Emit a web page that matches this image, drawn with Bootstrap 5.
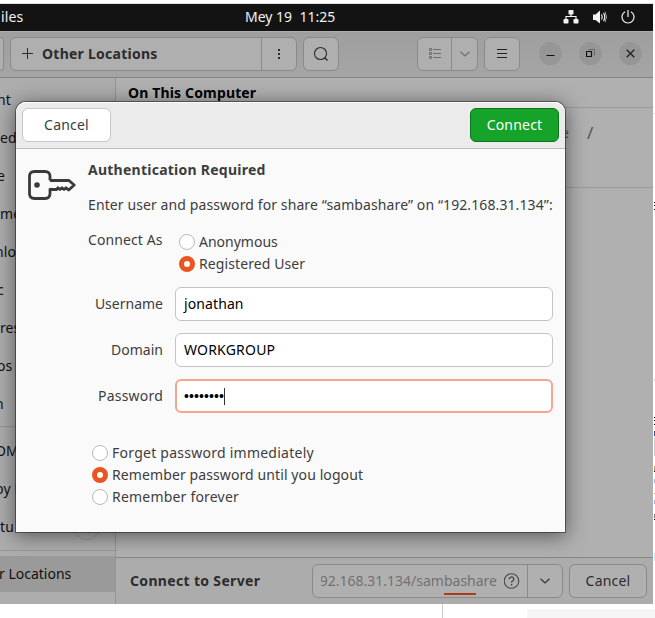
<!DOCTYPE html>
<html lang="en">
<head>
<meta charset="utf-8">
<title>Authentication Required</title>
<link href="https://cdn.jsdelivr.net/npm/bootstrap@5.3.0/dist/css/bootstrap.min.css" rel="stylesheet">
<style>
body{font-family:"Noto Sans","Open Sans",sans-serif;font-size:14px;line-height:22px;letter-spacing:.1px;background:#fff;color:#3d3d3d;width:655px;height:618px;overflow:hidden}
svg{display:block;flex:none}
.ls-0{letter-spacing:0}.ls-2{letter-spacing:.2px}.ls-3{letter-spacing:.25px}
.desktop{width:653px;height:601px;margin-top:3px;border-top:1px solid #ddd}
.top-panel{height:27px;background:#131313;color:#f2f2f2;padding:0 18px 1px 0}
.panel-app{width:245px;padding-left:1px}
.clock{white-space:pre}
.speaker{margin:0 13px}
.head-bar{height:47px;background:linear-gradient(#9f9f9f,#a5a5a5);border-bottom:1px solid #838383;border-top:1px solid #b0b0b0;padding:0 11px 2px 0}
.tool{height:34px;border:1px solid #8a8a8a;border-radius:6px;background:#afafaf;color:#2c2c2c}
.tool-edge{width:4px;border-left:0;border-radius:0 6px 6px 0}
.path-bar{width:287px;margin-left:6px}
.path-menu{width:35px;border-left:1px solid #8a8a8a}
.plus{margin:0 8px 0 11px}
.w-36{width:36px;margin-left:6px}
.view-tool{width:61px;margin-left:78px;color:#6f6f6f}
.view-more{width:26px;border-left:1px solid #8a8a8a}
.win-group{gap:17px}
.win-btn{width:23px;height:23px;border-radius:50%;background:#969696}
.side{width:116px;background:#adadad;border-right:1px solid #959595;color:#111;overflow:hidden;white-space:nowrap;padding-top:3px}
.side-row{height:38px;line-height:38px}
.cut-3{text-indent:-3px}.cut-5{text-indent:-5px}
.side-sep{height:1px;background:#989898;margin:3px 0 5px}
.side-sep.last{margin-top:4px}
.side-row.active{height:36px;line-height:36px;background:#9a9a9a;letter-spacing:0;text-indent:-1px}
.eject{width:26px;height:26px;border:1px solid #999;border-radius:50%;margin-right:15px}
.places{background:#b0b0b0}
.places-title{height:30px;line-height:30px;padding-left:12px;border-bottom:1px solid #9b9b9b;color:#000;letter-spacing:.15px}
.place-row{height:80px;border-bottom:1px solid #9b9b9b;color:#555;line-height:50px}
.place-row>span:first-child{width:453px;text-align:right}
.place-row>span+span{margin-left:18px;font-size:17px}
.server-bar{height:47px;background:#acacac;border-top:1px solid #868686;padding:0 6px 0 14px;color:#2c2c2c}
.server-title{width:182px;letter-spacing:.33px}
.server-bar .tool{background:#b0b0b0}
.address{width:251px}
.address-text{width:176px;height:32px;margin-left:8px;line-height:32px;overflow:hidden;color:#707070;position:relative}
.address-pulse{position:absolute;left:123px;bottom:2px;width:32px;height:2px;background:#ab3c15}
.address-more{width:35px;border-left:1px solid #8a8a8a}
.server-cancel{width:78px;margin-left:6px;line-height:32px}
.below{height:14px}
.below-line{width:443px;border-right:1px solid #ccc}
.below-box{width:128px;margin-top:5px;background:#f6f6f6}
.dialog-win{position:absolute;left:16px;top:102px;width:549px;height:430px;background:#fafafa;border-radius:10px 10px 0 0;box-shadow:0 0 0 1px rgba(0,0,0,.42),0 3px 20px 1px rgba(0,0,0,.5)}
.dialog-head{height:47px;background:#ebebeb;border-bottom:1px solid #bcbcbc;border-radius:10px 10px 0 0;padding:0 6px;box-shadow:inset 0 1px #fff}
.dlg-btn{height:34px;width:89px;padding:0;border-radius:6px;font-size:14px;line-height:32px;border:1px solid #c6c6c6;background:#fff;color:#3d3d3d}
.dlg-btn.ok{background:#15a32a;border-color:#0d731b;color:#fff}
.dialog-main{padding:10px 12px 0 12px}
.key-icon{margin:11px 12px 0 0}
.fields{width:465px}
.gap-line{margin-top:13px}
.form-line{height:34px;margin-bottom:12px}
.form-line label{width:75px;text-align:right;line-height:34px}
.form-control.field{width:378px;height:34px;margin-left:12px;padding:0 8px;line-height:32px;font-size:14px;color:#000;border:1px solid #c4c4c4;border-radius:6px;background:#fff}
.form-control.field.focused{border:2px solid #f4a78c;line-height:30px;padding:0 7px}
.dots{font-family:"Liberation Sans",sans-serif;letter-spacing:.1px}
.caret{width:1px;height:17px;background:#333}
.radio-dot{width:16px;height:16px;border:1px solid #b9b9b9;border-radius:50%;background:#fff;margin-right:4px;flex:none}
.radio-dot.on{border:5.5px solid #e95420}
.radio-line{height:22px}
.as-label{width:91px}
.as-options{padding:2px 0 12px}
.keep-options{padding:17px 0 0 4px}
.edge{position:absolute;left:653px;top:0}
</style>
</head>
<body>
<div class="desktop d-flex flex-column">
  <div class="top-panel d-flex align-items-center">
    <span class="panel-app">iles</span>
    <span class="clock ls-0">Mey 19  11:25</span>
    <div class="d-flex align-items-center ms-auto">
      <svg width="16" height="14" viewBox="0 0 16 14" fill="#f2f2f2"><rect x="5.500" y="0" width="5" height="4.500" rx=".8"/><rect x=".5" y="9" width="5" height="4.500" rx=".8"/><rect x="10.500" y="9" width="5" height="4.500" rx=".8"/><path d="M8 4v2.500M3 10V6.500h10V10" fill="none" stroke="#f2f2f2" stroke-width="1.200"/></svg>
      <svg class="speaker" width="16" height="14" viewBox="0 0 16 14" fill="#f2f2f2"><path d="M1 4.500h2.500L8 .5v13L3.500 10H1z"/><path d="M9.500 4.500q1.500 2.500 0 5M11.500 3q2.500 4 0 8" fill="none" stroke="#f2f2f2" stroke-width="1.200"/><path d="M13 1.700q3 5.300 0 10.600" fill="none" stroke="#aaa"/></svg>
      <svg width="14" height="14" viewBox="0 0 14 14" fill="none" stroke="#f2f2f2" stroke-width="1.200"><path d="M7 0v7M4 1.800a6 6 0 1 0 6 0"/></svg>
    </div>
  </div>
  <div class="head-bar d-flex align-items-center">
    <div class="tool tool-edge"></div>
    <div class="tool path-bar d-flex">
      <div class="d-flex align-items-center flex-grow-1">
        <svg class="plus" width="12" height="12" viewBox="0 0 12 12" stroke="currentColor"><path d="M5.500 0v11M0 5.500h11"/></svg>
        <b class="ls-3">Other Locations</b>
      </div>
      <div class="path-menu d-flex align-items-center justify-content-center"><svg width="2" height="10" fill="currentColor"><path d="M0 0h2v2H0zM0 4h2v2H0zM0 8h2v2H0z"/></svg></div>
    </div>
    <div class="tool w-36 d-flex align-items-center justify-content-center"><svg width="16" height="16" viewBox="0 0 16 16" fill="none" stroke="currentColor" stroke-width="1.100"><circle cx="7.500" cy="7.500" r="6"/><path d="M11.500 11.500l3 3" stroke-width="1.500"/></svg></div>
    <div class="tool view-tool d-flex">
      <div class="d-flex flex-grow-1 align-items-center justify-content-center"><svg width="12" height="12" viewBox="0 0 12 12" fill="none" stroke="currentColor"><path d="M.5.500h2v2h-2zM.5 4.500h2v2h-2zM.5 8.500h2v2h-2zM4 1.500h8M4 5.500h8M4 9.500h8"/></svg></div>
      <div class="view-more d-flex align-items-center justify-content-center"><svg width="10" height="6" viewBox="0 0 10 6" fill="none" stroke="currentColor" stroke-width="1.200"><path d="M.5.8L5 5 9.500.8"/></svg></div>
    </div>
    <div class="tool w-36 d-flex align-items-center justify-content-center"><svg width="10" height="10" viewBox="0 0 10 10" stroke="#222"><path d="M0 .5h10M0 4.500h10M0 8.500h10"/></svg></div>
    <div class="win-group d-flex ms-auto">
      <div class="win-btn d-flex align-items-center justify-content-center"><svg width="9" height="7"><path d="M.5 5.500h8" stroke="#111"/></svg></div>
      <div class="win-btn d-flex align-items-center justify-content-center"><svg width="9" height="9" viewBox="0 0 9 9" fill="none"><path d="M2.500.5h6v6" stroke="#666"/><path d="M.5 2.500h5v5h-5z" stroke="#111" stroke-width="1.200"/></svg></div>
      <div class="win-btn d-flex align-items-center justify-content-center"><svg width="9" height="9" viewBox="0 0 9 9" stroke="#222" stroke-width="1.300"><path d="M.7.7l7.600 7.600M8.300.7L.7 8.300"/></svg></div>
    </div>
  </div>
  <div class="d-flex flex-grow-1">
    <div class="side">
      <div class="side-row cut-3">nt</div>
      <div class="side-row">ed</div>
      <div class="side-row cut-3">e</div>
      <div class="side-row">me</div>
      <div class="side-row cut-5">nloads</div>
      <div class="side-row cut-3">c</div>
      <div class="side-row">res</div>
      <div class="side-row cut-3">os</div>
      <div class="side-row cut-5">n</div>
      <div class="side-sep"></div>
      <div class="side-row cut-5">OM</div>
      <div class="side-row cut-5">by D</div>
      <div class="side-row d-flex justify-content-between align-items-center"><span>tu</span><span class="eject"></span></div>
      <div class="side-sep last"></div>
      <div class="side-row active">r Locations</div>
    </div>
    <div class="places d-flex flex-column flex-grow-1">
      <div class="places-title fw-bold">On This Computer</div>
      <div class="place-row d-flex"><span>e</span><span>/</span></div>
      <div class="server-bar d-flex align-items-center mt-auto">
        <b class="server-title text-nowrap">Connect to Server</b>
        <div class="tool address d-flex">
          <div class="address-text d-flex justify-content-end ls-0"><span>92.168.31.134/sambashare</span><i class="address-pulse"></i></div>
          <div class="d-flex align-items-center flex-grow-1 justify-content-center"><svg width="16" height="16" viewBox="0 0 16 16" fill="none" stroke="#4a4a4a" stroke-width="1.100"><circle cx="7.500" cy="8" r="7.300"/><path d="M5.200 6.200a2.300 2.100 0 1 1 3.500 1.700Q7.500 8.600 7.500 9.800" stroke-width="1.300"/><path d="M6.800 11h1.500v1.500H6.800z" fill="#4a4a4a" stroke="none"/></svg></div>
          <div class="address-more d-flex align-items-center justify-content-center"><svg width="10" height="6" viewBox="0 0 10 6" fill="none" stroke="#333" stroke-width="1.200"><path d="M.5.8L5 5 9.500.8"/></svg></div>
        </div>
        <div class="tool server-cancel text-center ls-2">Cancel</div>
      </div>
    </div>
  </div>
</div>
<div class="below d-flex justify-content-between"><div class="below-line"></div><div class="below-box"></div></div>
<svg class="edge" width="2" height="618"><path d="M1 113h1v1H1z" fill="#ccc"/><path d="M1 202h1v1H1zM1 205h1v1H1zM1 209h1v1H1zM1 417h1v1H1zM1 420h1v1H1zM1 424h1v1H1zM1 471h1v1H1zM1 519h1v1H1z" fill="#111"/><path d="M1 379h1v2H1zM1 553h1v8H1z" fill="#b5edf7"/><path d="M1 431h1v5H1z" fill="#35559a"/><path d="M1 438h1v18H1z" fill="#ccc"/><path d="M1 466h1v5H1zM1 493h1v1H1z" fill="#b9a35a"/><path d="M1 479h1v4H1zM1 500h1v4H1z" fill="#8fb4f0"/><path d="M1 514h1v4H1z" fill="#7c8a70"/></svg>

<div class="dialog-win">
  <div class="dialog-head d-flex align-items-center justify-content-between">
    <button class="btn dlg-btn ls-2">Cancel</button>
    <button class="btn dlg-btn ok ls-2">Connect</button>
  </div>
  <div class="dialog-main d-flex">
    <svg class="key-icon" width="48" height="30" viewBox="0 0 48 30" fill="none" stroke="#3a3a3a" stroke-width="2.800" stroke-linejoin="round"><path d="M22 10.500V6.500Q22 1.500 17 1.500H6.500Q1.500 1.500 1.500 6.500v17q0 5 5 5H17q5 0 5-5V19.500h7.500"/><path d="M22 10.500h19l5.200 4.500-5.500 5-2.700-2.200-2 1.700-2-1.700-2 1.700-2-1.700-1.500 1.700"/><circle cx="9" cy="15" r="2.800" fill="#3a3a3a" stroke="none"/></svg>
    <div class="fields">
      <div class="fw-bold ls-3">Authentication Required</div>
      <div class="text-nowrap gap-line">Enter user and password for share “sambashare” on “192.168.31.134”:</div>
      <div class="d-flex gap-line">
        <div class="as-label">Connect As</div>
        <div class="as-options">
          <div class="radio-line d-flex align-items-center"><span class="radio-dot"></span><span class="ls-0">Anonymous</span></div>
          <div class="radio-line d-flex align-items-center"><span class="radio-dot on"></span><span>Registered User</span></div>
        </div>
      </div>
      <div class="form-line d-flex"><label class="ls-0">Username</label><div class="form-control field">jonathan</div></div>
      <div class="form-line d-flex"><label class="ls-0">Domain</label><div class="form-control field ls-2">WORKGROUP</div></div>
      <div class="form-line d-flex"><label class="ls-2">Password</label><div class="form-control field focused d-flex align-items-center"><span class="dots">••••••••</span><span class="caret"></span></div></div>
      <div class="keep-options">
        <div class="radio-line d-flex align-items-center"><span class="radio-dot"></span><span class="ls-3">Forget password immediately</span></div>
        <div class="radio-line d-flex align-items-center"><span class="radio-dot on"></span><span>Remember password until you logout</span></div>
        <div class="radio-line d-flex align-items-center"><span class="radio-dot"></span><span class="ls-2">Remember forever</span></div>
      </div>
    </div>
  </div>
</div>
<script src="https://cdn.jsdelivr.net/npm/bootstrap@5.3.0/dist/js/bootstrap.bundle.min.js"></script>
</body>
</html>
